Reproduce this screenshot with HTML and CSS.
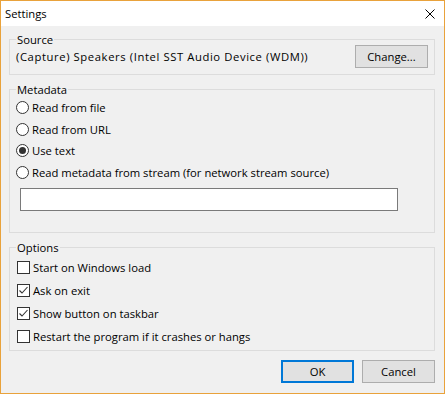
FILE: index.html
```html
<!DOCTYPE html>
<html lang="en">
<head>
    <meta charset="UTF-8">
    <title>Settings</title>
    <link rel="stylesheet" href="styles.css">
</head>
<body>
    <div class="window">
        <div class="titlebar">
            <span class="title">Settings</span>
            <svg class="close" width="10" height="10" viewBox="0 0 10 10">
                <path d="M0.5 0.5 L9.5 9.5 M9.5 0.5 L0.5 9.5" stroke="#000" stroke-width="1" fill="none"/>
            </svg>
        </div>

        <div class="content">
            <div class="group group-source">
                <div class="group-title"><span>Source</span></div>
                <div class="source-row">
                    <span class="source-name">(Capture) Speakers (Intel SST Audio Device (WDM))</span>
                    <button class="btn">Change...</button>
                </div>
            </div>

            <div class="group group-meta">
                <div class="group-title"><span>Metadata</span></div>
                <div class="radio-list">
                    <label class="radio-row"><span class="radio"></span>Read from file</label>
                    <label class="radio-row"><span class="radio"></span>Read from URL</label>
                    <label class="radio-row"><span class="radio on"></span>Use text</label>
                    <label class="radio-row"><span class="radio"></span>Read metadata from stream (for network stream source)</label>
                </div>
                <input class="text-input" type="text">
            </div>

            <div class="group group-options">
                <div class="group-title"><span>Options</span></div>
                <div class="check-list">
                    <label class="check-row"><span class="box"></span>Start on Windows load</label>
                    <label class="check-row">
                        <span class="box"><svg width="11" height="11" viewBox="0 0 11 11"><path d="M1.5 5.5 L4 8 L9.5 2" stroke="#333" stroke-width="1.1" fill="none"/></svg></span>Ask on exit
                    </label>
                    <label class="check-row">
                        <span class="box"><svg width="11" height="11" viewBox="0 0 11 11"><path d="M1.5 5.5 L4 8 L9.5 2" stroke="#333" stroke-width="1.1" fill="none"/></svg></span>Show button on taskbar
                    </label>
                    <label class="check-row"><span class="box"></span>Restart the program if it crashes or hangs</label>
                </div>
            </div>

            <div class="buttons">
                <button class="btn btn-default">OK</button>
                <button class="btn">Cancel</button>
            </div>
        </div>
    </div>
</body>
</html>
```

FILE: styles.css
```css
body {
    margin: 0;
    background-color: #f0f0f0;
    font-family: 'Open Sans', sans-serif;
    font-size: 11.25px;
    color: #000;
}
.window {
    width: 445px;
    height: 394px;
    box-sizing: border-box;
    border: 1px solid #e9a23b;
    background-color: #f0f0f0;
}
.titlebar {
    height: 25px;
    background-color: #fff;
    display: flex;
    align-items: center;
    justify-content: space-between;
    padding: 0 9px 0 4px;
}
.title {
    line-height: 16px;
    margin-top: 1px;
}
.close {
    display: block;
    margin-top: 1px;
}
.content {
    padding: 13px 9px 10px 8px;
}
.group {
    border: 1px solid #dcdcdc;
    padding: 0 6px;
}
.group + .group {
    margin-top: 14px;
}
.group-title {
    margin-top: -5px;
    height: 10px;
    line-height: 10px;
}
.group-title span {
    background-color: #f0f0f0;
    padding: 0 1px;
}
.group-source {
    padding-bottom: 6px;
}
.source-row {
    display: flex;
    align-items: center;
    justify-content: space-between;
}
.source-name {
    letter-spacing: 0.6px;
}
.btn {
    font-family: inherit;
    font-size: 11.25px;
    color: #000;
    width: 73px;
    height: 23px;
    padding: 0;
    background-color: #e1e1e1;
    border: 1px solid #adadad;
    line-height: 16px;
}
.group-meta {
    padding-bottom: 21px;
}
.radio-list {
    margin-top: 2px;
}
.radio-row {
    display: flex;
    align-items: center;
    height: 21.5px;
}
.radio {
    width: 13px;
    height: 13px;
    box-sizing: border-box;
    border: 1px solid #333;
    border-radius: 50%;
    background-color: #fff;
    margin-right: 3px;
    display: flex;
    align-items: center;
    justify-content: center;
}
.radio.on::after {
    content: "";
    width: 7px;
    height: 7px;
    border-radius: 50%;
    background-color: #333;
}
.text-input {
    display: block;
    margin: 5px 0 0 4px;
    width: 378px;
    height: 23px;
    box-sizing: border-box;
    border: 1px solid #7a7a7a;
    background-color: #fff;
    outline: none;
}
.group-options {
    padding-bottom: 2.5px;
}
.check-list {
    margin-top: 3.5px;
}
.check-row {
    display: flex;
    align-items: center;
    height: 22.75px;
}
.box {
    width: 13px;
    height: 13px;
    box-sizing: border-box;
    border: 1px solid #333;
    background-color: #fff;
    margin: 0 3px 0 1px;
}
.box svg {
    display: block;
}
.buttons {
    display: flex;
    justify-content: flex-end;
    gap: 8px;
    margin-top: 9px;
}
.btn-default {
    border: 2px solid #0078d7;
}
```
